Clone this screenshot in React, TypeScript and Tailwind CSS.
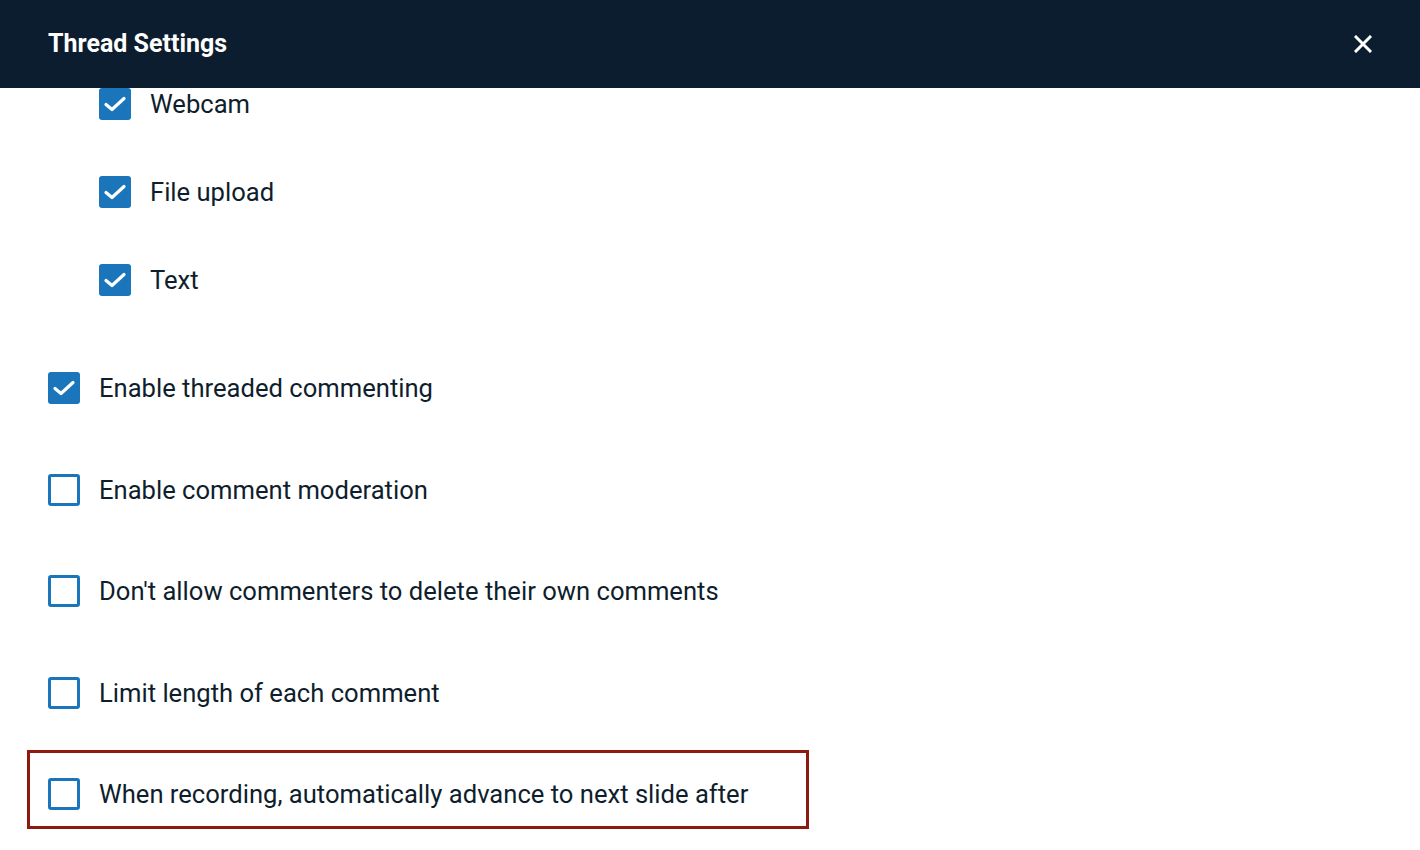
import React from "react";

const font = { fontFamily: "Roboto, 'Noto Sans', Arial, sans-serif" };

function Box({ checked }: { checked: boolean }) {
  if (checked) {
    return (
      <span className="flex h-[32px] w-[32px] shrink-0 rounded-[3px] bg-[#1b75bb]">
        <svg width="32" height="32" viewBox="0 0 32 32" fill="none">
          <path d="M7 16.5 L13 21.5 L25 10.5" stroke="white" strokeWidth="3.2" strokeLinecap="round" strokeLinejoin="round" />
        </svg>
      </span>
    );
  }
  return <span className="h-[32px] w-[32px] shrink-0 rounded-[3px] border-[3px] border-[#1b75bb] bg-white" />;
}

function Row({ label, checked = false }: { label: string; checked?: boolean }) {
  return (
    <label className="flex h-[32px] items-center gap-[19px]">
      <Box checked={checked} />
      <span className="mt-[2px] text-[25.6px] leading-none text-[#0f1e2d]">{label}</span>
    </label>
  );
}

export default function App() {
  return (
    <div className="h-[850px] w-full overflow-hidden bg-white" style={font}>
      <header className="flex h-[88px] items-center justify-between bg-[#0b1d2e] pl-[48px] pr-[45px]">
        <h1 className="text-[25px] font-bold text-white">Thread Settings</h1>
        <button className="flex h-[24px] w-[24px] items-center justify-center">
          <svg width="18" height="18" viewBox="0 0 18 18" fill="none">
            <path d="M2 2 L16 16 M16 2 L2 16" stroke="white" strokeWidth="3" strokeLinecap="square" />
          </svg>
        </button>
      </header>

      <div className="flex flex-col gap-[56px] pl-[99px]">
        <Row label="Webcam" checked />
        <Row label="File upload" checked />
        <Row label="Text" checked />
      </div>

      <div className="mt-[76px] flex flex-col gap-[69.5px] pl-[48px]">
        <Row label="Enable threaded commenting" checked />
        <Row label="Enable comment moderation" />
        <Row label="Don't allow commenters to delete their own comments" />
        <Row label="Limit length of each comment" />
        <div className="-ml-[21px] -mt-[28px] w-[782px] border-[3px] border-[#8c1a0e] pb-[16px] pl-[18px] pt-[25px]">
          <Row label="When recording, automatically advance to next slide after" />
        </div>
      </div>
    </div>
  );
}
